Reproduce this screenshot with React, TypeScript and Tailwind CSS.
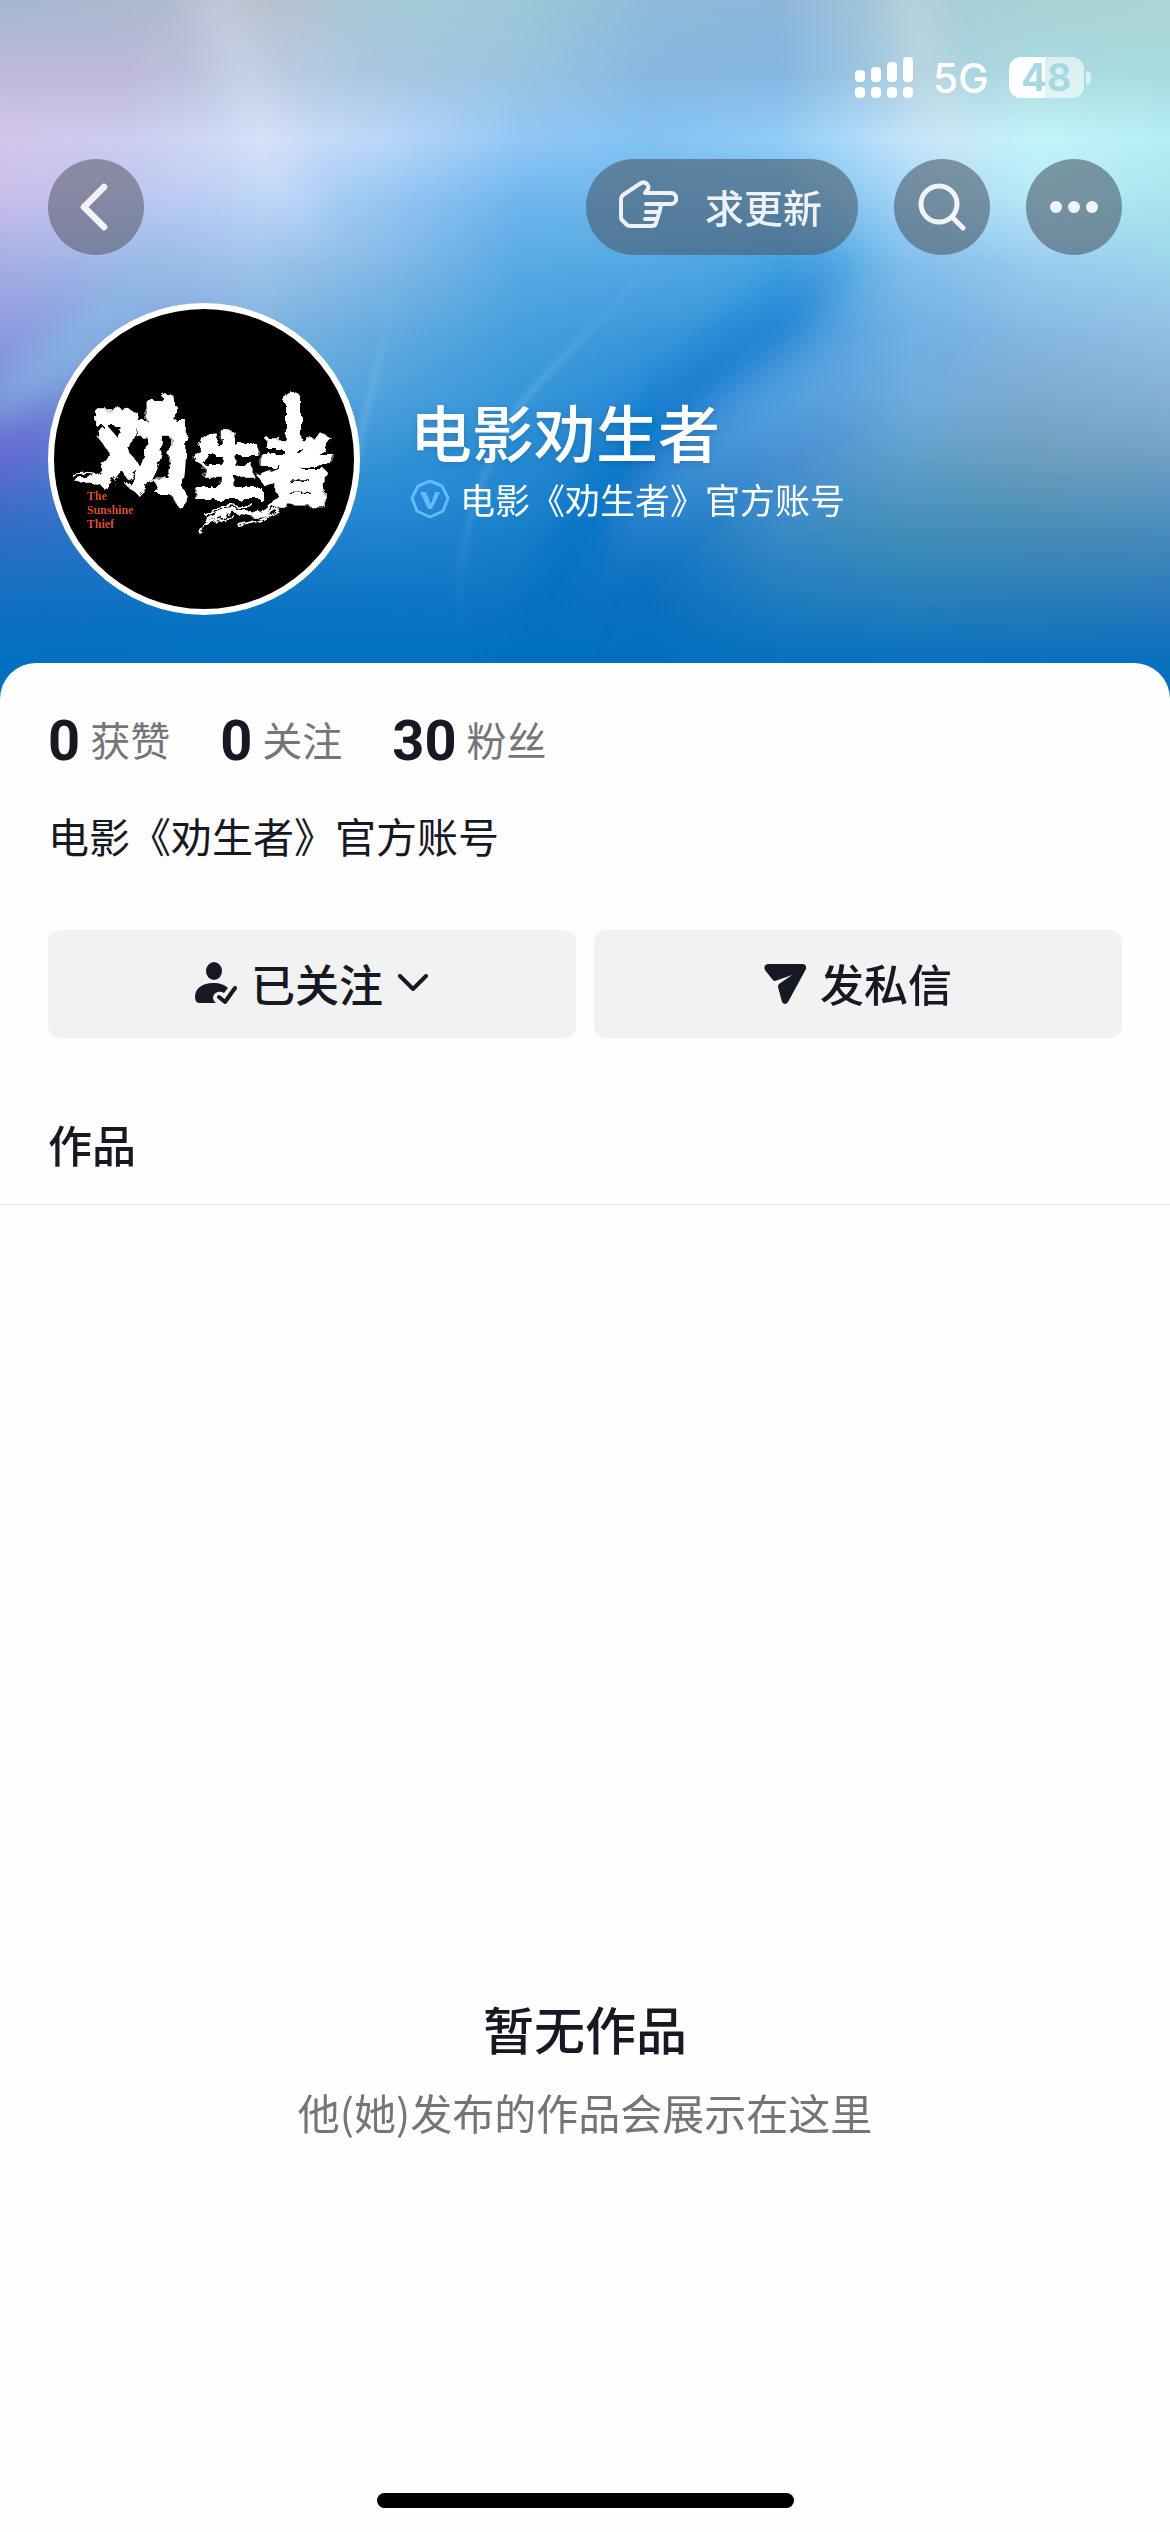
import React from 'react';
import { ChevronLeft } from 'lucide-react';

// Colour rows of the cover, top to bottom. Each row is a left-to-right gradient
// and is faded in over the row above it.
const COVER_ROWS = [
  { y: 0, colors: ['#a3b8d0', '#adb9d0', '#b9c0cf', '#a5cad7', '#9cc9d8', '#90bad8', '#8fb7da', '#a9cbd8', '#a7d2d6', '#abd6d6'] },
  { y: 70, colors: ['#bfb8dc', '#bcb9d8', '#bccbe0', '#a6c6e0', '#9ac4e0', '#88b7e0', '#84b5e2', '#abcfe0', '#a9dadf', '#a8dadf'] },
  { y: 140, colors: ['#d3c6ec', '#cdcdf1', '#d2dff8', '#b9d6f8', '#92c7f5', '#83c2f3', '#92cdf6', '#c4e5fb', '#c4f4fa', '#b4eff5'] },
  { y: 200, colors: ['#c8bdea', '#bcc6f0', '#bcd5f6', '#95c5f2', '#6fb6ee', '#6ab5ec', '#6bb8ee', '#a5d5f6', '#b7e9f7', '#a9e4ee'] },
  { y: 260, colors: ['#a6afe5', '#a0bbe8', '#a0c4ea', '#84bae8', '#5aaae4', '#55a9e3', '#48a4e3', '#83c0ec', '#9bcdee', '#9bd6ea'] },
  { y: 330, colors: ['#909be0', '#86a4de', '#7fb4e0', '#64abdf', '#45a0dd', '#3c98db', '#3893da', '#72b0e2', '#86b9e3', '#92bfe4'] },
  { y: 400, colors: ['#7a82d6', '#6d9ad8', '#63a8dc', '#4ba0db', '#3595d9', '#2a8bd5', '#4698da', '#6fabdc', '#7da9cd', '#85afd4'] },
  { y: 460, colors: ['#5a70cf', '#4f88d0', '#4797d6', '#3292d6', '#258ad3', '#1f81cd', '#488fd2', '#5f9fca', '#6b9ebc', '#6d9fc4'] },
  { y: 530, colors: ['#336dc4', '#2577c8', '#2580cc', '#2084d0', '#1b80cc', '#1878c6', '#3a8ac6', '#438fb8', '#478db6', '#4a8cbc'] },
  { y: 600, colors: ['#1370c2', '#0f72c2', '#0d75c4', '#0c76c5', '#0f75c4', '#0a6fc0', '#1f7cc0', '#277fbc', '#2a7cb9', '#2a79bb'] },
  { y: 665, colors: ['#0070bf', '#0070bf', '#0070c0', '#0070c0', '#0070c0', '#006fbf', '#0470bf', '#0670be', '#0570be', '#0570be'] },
];

const STATS = [
  { value: '0', label: '获赞' },
  { value: '0', label: '关注' },
  { value: '30', label: '粉丝' },
];

const SIGNAL_BARS = [12, 15, 20, 25];

function Cover() {
  return (
    <svg
      className="absolute inset-0 h-full w-full"
      viewBox="0 0 1170 720"
      preserveAspectRatio="none"
      aria-hidden="true"
    >
      <defs>
        {COVER_ROWS.map((row, i) => {
          const prev = i === 0 ? 0 : COVER_ROWS[i - 1].y;
          return (
            <React.Fragment key={row.y}>
              <linearGradient id={`row-${i}`} x1="0" x2="1" y1="0" y2="0">
                {row.colors.map((color, c) => (
                  <stop key={c} offset={c / (row.colors.length - 1)} stopColor={color} />
                ))}
              </linearGradient>
              <linearGradient id={`fade-${i}`} gradientUnits="userSpaceOnUse" x1="0" x2="0" y1={prev} y2={row.y}>
                <stop offset="0" stopColor={i === 0 ? '#fff' : '#000'} />
                <stop offset="1" stopColor="#fff" />
              </linearGradient>
              <mask id={`mask-${i}`} maskUnits="userSpaceOnUse" x="0" y="0" width="1170" height="720">
                <rect y={prev} width="1170" height={720 - prev} fill={`url(#fade-${i})`} />
              </mask>
            </React.Fragment>
          );
        })}
        <filter id="soft" x="-50%" y="-50%" width="200%" height="200%">
          <feGaussianBlur stdDeviation="18" />
        </filter>
        <filter id="hair" x="-50%" y="-50%" width="200%" height="200%">
          <feGaussianBlur stdDeviation="3" />
        </filter>
        <linearGradient id="hair-fade" gradientUnits="userSpaceOnUse" x1="0" x2="0" y1="250" y2="640">
          <stop offset="0" stopColor="#8cc4ee" stopOpacity="0" />
          <stop offset="0.4" stopColor="#8cc4ee" stopOpacity="0.4" />
          <stop offset="1" stopColor="#8cc4ee" stopOpacity="0" />
        </linearGradient>
        <linearGradient id="fold-fade" gradientUnits="userSpaceOnUse" x1="0" x2="0" y1="240" y2="640">
          <stop offset="0" stopColor="#1a86d8" stopOpacity="0.3" />
          <stop offset="0.35" stopColor="#0a78cc" stopOpacity="0.8" />
          <stop offset="1" stopColor="#006dc0" stopOpacity="0.7" />
        </linearGradient>
      </defs>
      {COVER_ROWS.map((row, i) => (
        <rect key={row.y} width="1170" height="720" fill={`url(#row-${i})`} mask={`url(#mask-${i})`} />
      ))}
      {/* Folds of light */}
      <g filter="url(#soft)">
        <path d="M850 240C740 300 660 380 600 460C560 520 520 580 510 660H560C580 560 630 470 710 400C790 340 850 310 850 240Z" fill="url(#fold-fade)" />
        <path d="M720 420C800 350 900 310 980 270C900 400 700 450 640 560C620 520 660 460 720 420Z" fill="#77b4ea" opacity="0.25" />
        <path d="M190 -20H235C250 70 300 140 320 250C260 200 220 100 190 -20Z" fill="#e6ecfb" opacity="0.25" />
        <path d="M890 -20H925C930 60 970 120 980 200C930 140 900 60 890 -20Z" fill="#e6e3e3" opacity="0.35" />
        <path d="M200 220C120 280 60 330 -10 390V440C70 390 140 310 200 220Z" fill="#86bfe4" opacity="0.7" />
        <path d="M-20 430L60 380L40 450L-20 490Z" fill="#6a5fd2" opacity="0.6" />
      </g>
      <g filter="url(#hair)" fill="none" stroke="url(#hair-fade)">
        <path d="M664 250C610 310 560 360 522 402C480 470 455 540 458 640" strokeWidth="6" />
        <path d="M380 250C405 310 370 370 355 470" strokeWidth="6" />
      </g>
    </svg>
  );
}

function StatusBar() {
  return (
    <div className="flex h-[98px] items-end justify-end gap-[20px] pr-[31px] text-white">
      <div className="flex items-end gap-[6px]">
        {SIGNAL_BARS.map((height) => (
          <div key={height} className="flex flex-col gap-[5px]">
            <span className="w-[10px] rounded-[4px] bg-white" style={{ height }} />
            <span className="h-[11px] w-[10px] rounded-[4px] bg-white" />
          </div>
        ))}
      </div>
      <span className="font-[Inter] text-[41px] leading-[40px] font-medium">5G</span>
      <div className="flex items-center gap-[2px]">
        <div className="flex h-[41px] w-[75px] items-center justify-center rounded-[12px] bg-linear-to-r from-white from-48% to-white/60 to-48% font-[Inter] text-[38px] leading-[41px] font-bold text-[#a9d8e0]">
          48
        </div>
        <span className="h-[14px] w-[5px] rounded-r-full bg-white/60" />
      </div>
    </div>
  );
}

function PointingHand() {
  return (
    <svg
      className="h-[52px] w-[60px]"
      viewBox="0 0 60 52"
      fill="none"
      stroke="currentColor"
      strokeWidth="4"
      strokeLinecap="round"
      strokeLinejoin="round"
      aria-hidden="true"
    >
      <path d="M27 13H53C60 13 60 24 53 24H28M27 13L30 9C32 5 27 1 23 3L5 15Q3 17 3 19V37Q3 39 4 40L9 45Q11 46 13 46H34Q37 46 38 43L42 30L43 24M28 32H41M27 39H38" />
    </svg>
  );
}

function Avatar() {
  return (
    <svg
      className="h-[312px] w-[312px] shrink-0 rounded-full border-[6px] border-white bg-black"
      viewBox="6 6 300 300"
      role="img"
      aria-label="电影劝生者"
    >
      <defs>
        <filter id="brush" x="-10%" y="-10%" width="120%" height="120%">
          <feTurbulence type="fractalNoise" baseFrequency="0.09" numOctaves="3" seed="7" result="noise" />
          <feDisplacementMap in="SourceGraphic" in2="noise" scale="10" />
        </filter>
      </defs>
      <g
        filter="url(#brush)"
        fill="#fff"
        stroke="#fff"
        strokeWidth="2"
        className="font-['Noto_Sans_CJK_SC',sans-serif] font-black"
      >
        <text x="46" y="182" fontSize="98">劝</text>
        <text x="145" y="190" fontSize="70">生</text>
        <text x="210" y="196" fontSize="78">者</text>
      </g>
      {/* Dry brush tails */}
      <g filter="url(#brush)" fill="none" stroke="#fff" strokeLinecap="round">
        <path d="M245 97V130" strokeWidth="16" />
        <path d="M120 99V115" strokeWidth="16" />
        <path d="M128 186L134 198" strokeWidth="14" />
        <path d="M30 178Q48 174 60 184" strokeWidth="4" />
        <path d="M24 172Q44 168 60 176" strokeWidth="2" />
        <path d="M160 218Q182 204 200 210T228 198" strokeWidth="5" />
        <path d="M150 228Q166 216 186 214M158 212Q184 200 206 204M190 222Q214 218 230 206" strokeWidth="2" />
      </g>
      <g fill="#e0492f" fontSize="12" className="font-['Liberation_Serif',serif] font-bold">
        <text x="39" y="197">The</text>
        <text x="39" y="211">Sunshine</text>
        <text x="39" y="225">Thief</text>
      </g>
    </svg>
  );
}

function VerifiedBadge() {
  return (
    <svg className="h-10 w-10 shrink-0" viewBox="0 0 40 40" fill="none" stroke="#62baff" aria-hidden="true">
      <path d="M20 2L32 7L38 19L33 32L20 38L7 32L2 19L8 7Z" strokeWidth="3" strokeLinejoin="round" />
      <path d="M10 13H16L21 25L25 13H30L22 30H18Z" fill="#62baff" stroke="none" />
    </svg>
  );
}

function FollowedIcon() {
  return (
    <svg className="h-[42px] w-[42px]" viewBox="0 0 42 42" aria-hidden="true">
      <ellipse cx="19" cy="9" rx="8" ry="9" fill="currentColor" />
      <path
        d="M0 35C0 26 8 21 18 21C25 21 30 23 33 26L29 31C24 28 18 31 18 36Q18 39 21 41H5Q0 41 0 35Z"
        fill="currentColor"
      />
      <path
        d="M24 35L30 40L40 26"
        fill="none"
        stroke="currentColor"
        strokeWidth="4"
        strokeLinecap="round"
        strokeLinejoin="round"
      />
    </svg>
  );
}

export default function App() {
  return (
    <main
      lang="zh-CN"
      className="flex min-h-screen flex-col bg-[#fefefe] font-['Noto_Sans_CJK_SC',sans-serif] text-[#161823]"
    >
      <header className="relative overflow-hidden px-12 pb-[105px]">
        <Cover />
        <div className="relative">
          <StatusBar />

          <nav className="mt-[61px] flex items-center gap-9 text-white/90">
            <button
              aria-label="返回"
              className="mr-auto flex h-24 w-24 items-center justify-center rounded-full bg-[#4b4b5a]/50"
            >
              <ChevronLeft className="mr-1 h-20 w-20" strokeWidth={2} />
            </button>
            <button className="flex h-24 items-center gap-[27px] rounded-full bg-[#4b5a69]/60 pr-9 pb-[2px] pl-8 text-[39px] leading-[48px] font-medium">
              <PointingHand />
              求更新
            </button>
            <button
              aria-label="搜索"
              className="flex h-24 w-24 items-center justify-center rounded-full bg-[#4b5a69]/60"
            >
              <svg
                className="h-12 w-12"
                viewBox="0 0 48 48"
                fill="none"
                stroke="currentColor"
                strokeWidth="5"
                strokeLinecap="round"
              >
                <circle cx="21" cy="21" r="18" />
                <path d="M34 34L45 45" />
              </svg>
            </button>
            <button
              aria-label="更多"
              className="flex h-24 w-24 items-center justify-center gap-[6px] rounded-full bg-[#4b5a69]/60"
            >
              <span className="h-3 w-3 rounded-full bg-white/90" />
              <span className="h-3 w-3 rounded-full bg-white/90" />
              <span className="h-3 w-3 rounded-full bg-white/90" />
            </button>
          </nav>

          <div className="mt-12 flex items-center gap-[50px]">
            <Avatar />
            <div className="text-white">
              <h1 className="text-[62px] leading-[72px] font-medium [text-shadow:0_2px_6px_rgb(0_0_0/0.15)]">
                电影劝生者
              </h1>
              <p className="mt-2 flex items-center gap-[10px] text-[35px] leading-[48px]">
                <VerifiedBadge />
                电影《劝生者》官方账号
              </p>
            </div>
          </div>
        </div>
      </header>

      <section className="relative -mt-[57px] flex flex-1 flex-col rounded-t-[36px] bg-[#fefefe]">
        <div className="px-12 pt-12">
          <ul className="flex gap-[50px]">
            {STATS.map((stat) => (
              <li key={stat.label} className="flex items-center gap-[10px]">
                <strong className="font-[Roboto] text-[56px] leading-[60px] font-bold">{stat.value}</strong>
                <span className="pb-1 text-[40px] leading-[52px] text-[#757579]">{stat.label}</span>
              </li>
            ))}
          </ul>

          <p className="mt-[34px] text-[41px] leading-[60px]">电影《劝生者》官方账号</p>

          <div className="mt-[65px] grid grid-cols-2 gap-[18px] text-[44px] leading-[60px] font-medium">
            <button className="flex h-[108px] items-center justify-center gap-[14px] rounded-xl bg-[#f2f2f2] pb-[2px]">
              <FollowedIcon />
              已关注
              <svg
                className="h-[18px] w-[32px]"
                viewBox="0 0 32 18"
                fill="none"
                stroke="currentColor"
                strokeWidth="4"
                strokeLinecap="round"
                strokeLinejoin="round"
              >
                <path d="M3 2L16 15L29 2" />
              </svg>
            </button>
            <button className="flex h-[108px] items-center justify-center gap-[14px] rounded-xl bg-[#f2f2f2] pb-[2px]">
              <svg className="h-[42px] w-[42px]" viewBox="0 0 42 42" fill="currentColor" aria-hidden="true">
                <path d="M4 2H39Q43 3 42 7L24 40Q21 44 18 40L14 25Q14 23 15 22L28 13L11 19Q9 19 8 17L1 8Q-1 3 4 2Z" />
              </svg>
              发私信
            </button>
          </div>
        </div>

        <h2 className="mt-[76px] border-b border-[#e3e3e5] px-12 pb-[30px] text-[44px] leading-[60px] font-medium">作品</h2>

        <div className="flex flex-1 flex-col items-center justify-end gap-[18px] pb-[351px] text-center">
          <h3 className="text-[51px] leading-[72px] font-medium">暂无作品</h3>
          <p className="text-[42px] leading-[60px] text-[#757579]">他(她)发布的作品会展示在这里</p>
        </div>

        <div className="mx-auto mb-6 h-[15px] w-[417px] rounded-full bg-black" />
      </section>
    </main>
  );
}
